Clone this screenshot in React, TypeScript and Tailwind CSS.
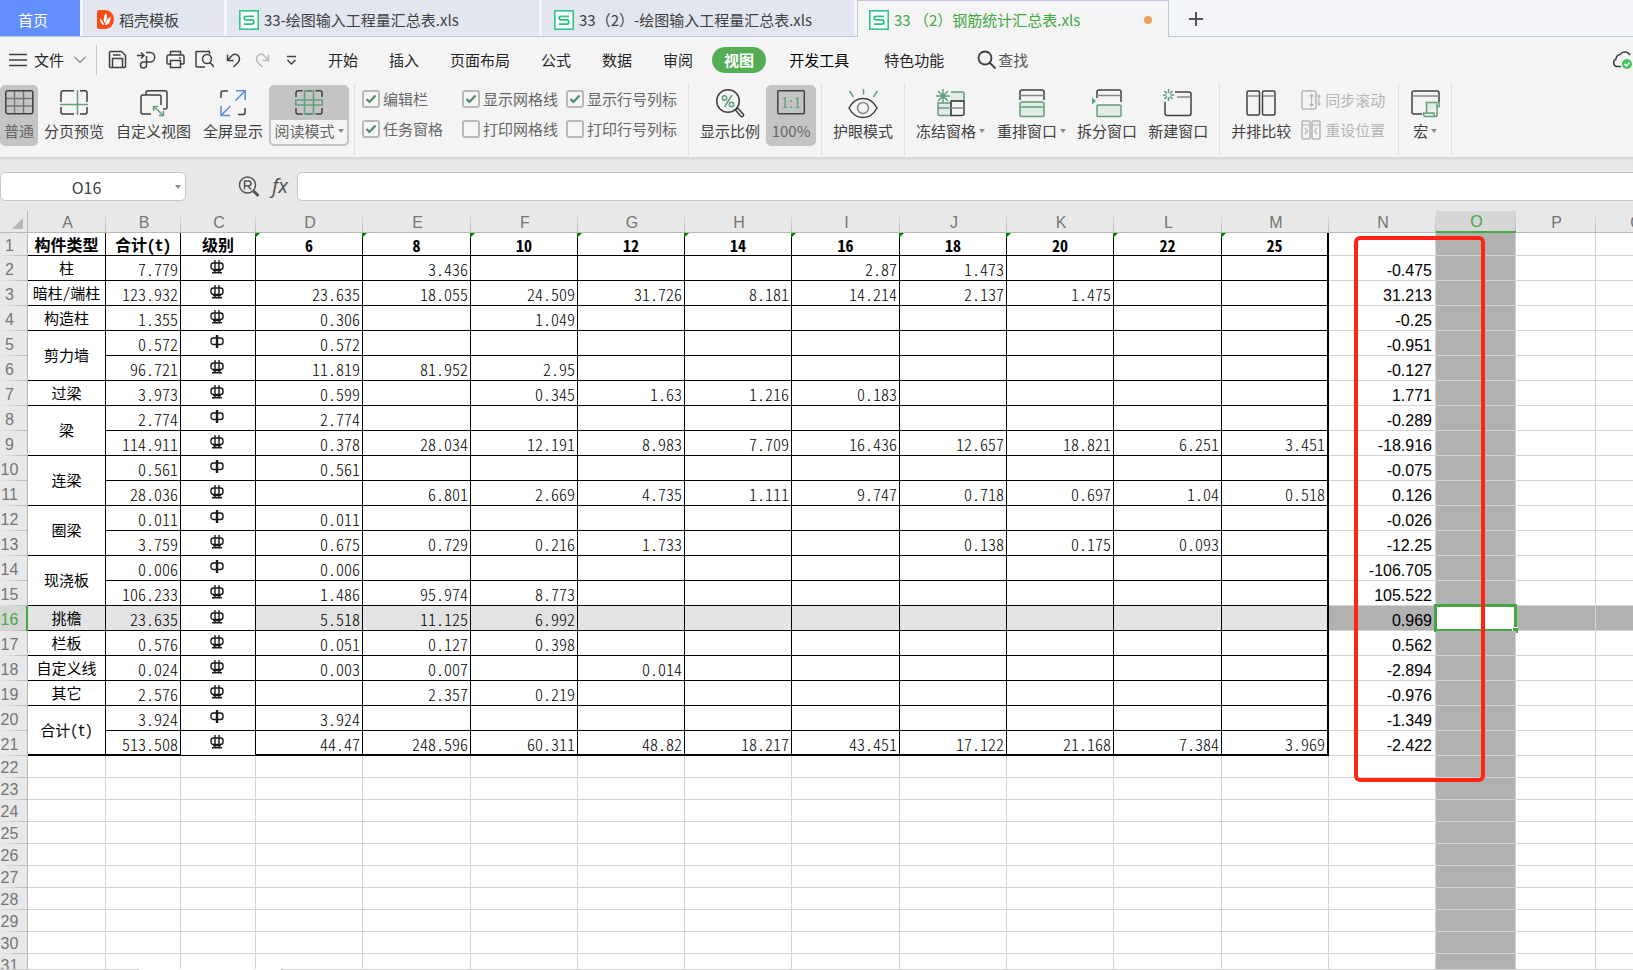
import { useState } from "react";
import type { ReactNode } from "react";
import clsx from "clsx";

type SheetRow = {
  name?: string;
  span?: number;
  total: string;
  grade: 1 | 3;
  values: string[];
  diff: string;
};

const COLUMNS = [
  { letter: "A", width: 78 },
  { letter: "B", width: 75 },
  { letter: "C", width: 75 },
  { letter: "D", width: 107 },
  { letter: "E", width: 108 },
  { letter: "F", width: 107 },
  { letter: "G", width: 107 },
  { letter: "H", width: 107 },
  { letter: "I", width: 108 },
  { letter: "J", width: 107 },
  { letter: "K", width: 107 },
  { letter: "L", width: 108 },
  { letter: "M", width: 107 },
  { letter: "N", width: 107 },
  { letter: "O", width: 80 },
  { letter: "P", width: 80 },
  { letter: "Q", width: 80 },
];

const DIAMETERS = ["6", "8", "10", "12", "14", "16", "18", "20", "22", "25"];

// values follow DIAMETERS, "" is an empty cell
const ROWS: SheetRow[] = [
  { name: "柱", total: "7.779", grade: 3, values: ["", "3.436", "", "", "", "2.87", "1.473", "", "", ""], diff: "-0.475" },
  { name: "暗柱/端柱", total: "123.932", grade: 3, values: ["23.635", "18.055", "24.509", "31.726", "8.181", "14.214", "2.137", "1.475", "", ""], diff: "31.213" },
  { name: "构造柱", total: "1.355", grade: 3, values: ["0.306", "", "1.049", "", "", "", "", "", "", ""], diff: "-0.25" },
  { name: "剪力墙", span: 2, total: "0.572", grade: 1, values: ["0.572", "", "", "", "", "", "", "", "", ""], diff: "-0.951" },
  { total: "96.721", grade: 3, values: ["11.819", "81.952", "2.95", "", "", "", "", "", "", ""], diff: "-0.127" },
  { name: "过梁", total: "3.973", grade: 3, values: ["0.599", "", "0.345", "1.63", "1.216", "0.183", "", "", "", ""], diff: "1.771" },
  { name: "梁", span: 2, total: "2.774", grade: 1, values: ["2.774", "", "", "", "", "", "", "", "", ""], diff: "-0.289" },
  { total: "114.911", grade: 3, values: ["0.378", "28.034", "12.191", "8.983", "7.709", "16.436", "12.657", "18.821", "6.251", "3.451"], diff: "-18.916" },
  { name: "连梁", span: 2, total: "0.561", grade: 1, values: ["0.561", "", "", "", "", "", "", "", "", ""], diff: "-0.075" },
  { total: "28.036", grade: 3, values: ["", "6.801", "2.669", "4.735", "1.111", "9.747", "0.718", "0.697", "1.04", "0.518"], diff: "0.126" },
  { name: "圈梁", span: 2, total: "0.011", grade: 1, values: ["0.011", "", "", "", "", "", "", "", "", ""], diff: "-0.026" },
  { total: "3.759", grade: 3, values: ["0.675", "0.729", "0.216", "1.733", "", "", "0.138", "0.175", "0.093", ""], diff: "-12.25" },
  { name: "现浇板", span: 2, total: "0.006", grade: 1, values: ["0.006", "", "", "", "", "", "", "", "", ""], diff: "-106.705" },
  { total: "106.233", grade: 3, values: ["1.486", "95.974", "8.773", "", "", "", "", "", "", ""], diff: "105.522" },
  { name: "挑檐", total: "23.635", grade: 3, values: ["5.518", "11.125", "6.992", "", "", "", "", "", "", ""], diff: "0.969" },
  { name: "栏板", total: "0.576", grade: 3, values: ["0.051", "0.127", "0.398", "", "", "", "", "", "", ""], diff: "0.562" },
  { name: "自定义线", total: "0.024", grade: 3, values: ["0.003", "0.007", "", "0.014", "", "", "", "", "", ""], diff: "-2.894" },
  { name: "其它", total: "2.576", grade: 3, values: ["", "2.357", "0.219", "", "", "", "", "", "", ""], diff: "-0.976" },
  { name: "合计(t)", span: 2, total: "3.924", grade: 1, values: ["3.924", "", "", "", "", "", "", "", "", ""], diff: "-1.349" },
  { total: "513.508", grade: 3, values: ["44.47", "248.596", "60.311", "48.82", "18.217", "43.451", "17.122", "21.168", "7.384", "3.969"], diff: "-2.422" },
];

const EMPTY_ROWS = [22, 23, 24, 25, 26, 27, 28, 29, 30, 31];
const ACTIVE_ROW = 16;
const ACTIVE_COL = "O";

const DARK = "#404040";
const GREEN = "#5f9f7b";
const PALE = "#e3ebe5";

function Svg({
  w = 30,
  h = 30,
  stroke = DARK,
  sw = 1.5,
  children,
}: {
  w?: number;
  h?: number;
  stroke?: string;
  sw?: number;
  children: ReactNode;
}) {
  return (
    <svg
      width={w}
      height={h}
      viewBox={`0 0 ${w} ${h}`}
      fill="none"
      stroke={stroke}
      strokeWidth={sw}
      aria-hidden="true"
      className="shrink-0"
    >
      {children}
    </svg>
  );
}

/* ---------- tab strip ---------- */

function SheetFileIcon() {
  return (
    <Svg w={20} h={20} stroke="#26c281" sw={1.5}>
      <rect x="0.8" y="0.8" width="18.4" height="18.4" fill="#fff" />
      <path d="M15 6.3H7.2Q5.2 6.3 5.2 8.1T7.2 9.9H12.8Q14.8 9.9 14.8 11.9T12.8 14.2H5" strokeWidth="1.8" />
    </Svg>
  );
}

function DocerIcon() {
  return (
    <Svg w={17} h={19} stroke="none">
      <path d="M2 0h6.5a8.5 9.5 0 0 1 0 19H2a2 2 0 0 1-2-2V2a2 2 0 0 1 2-2z" fill="#fb4a12" />
      <path d="M8.5 3q3 3 .5 7.500q-.5 1-.8 3q-1.600-2-1.500-4.500q.2-3 1.800-6zM13.500 6.500q.3 5-2 7.200-1.500 1.300-3.300 1.500 0-3 1.500-5 1.500-2.200 3.800-3.700zM2.800 8.500q3 1.500 4.500 6.500-4-.5-4.500-6.500z" fill="#fff" />
    </Svg>
  );
}

function TabBar() {
  const inactive =
    "flex h-full items-center gap-[5px] border-b border-[#bcc7dc] bg-[#e2e6ef] pl-3 pt-1 text-[#404040]";
  return (
    <nav className="flex h-[37px] gap-[3px] overflow-hidden bg-[#f2f4f9] shadow-[inset_0_-1px_0_#bcc7dc]">
      <button className="h-full w-20 shrink-0 border-b border-[#bcc7dc] bg-[#638ffe] pr-[14px] pt-1 text-white">
        首页
      </button>
      <button className={clsx(inactive, "w-[141px] shrink-0")}>
        <span className="flex w-[19px] justify-end">
          <DocerIcon />
        </span>
        稻壳模板
      </button>
      <button className={clsx(inactive, "w-[312px] shrink-0")}>
        <SheetFileIcon />
        33-绘图输入工程量汇总表.xls
      </button>
      <button className={clsx(inactive, "w-[312px] shrink-0")}>
        <SheetFileIcon />
        33（2）-绘图输入工程量汇总表.xls
      </button>
      <button className="flex h-full w-[312px] shrink-0 items-center gap-[5px] border-x border-t border-[#bcc7dc] bg-[#f4f4f4] pl-[11px] pr-4 pt-[2px] text-[#3fa83f]">
        <SheetFileIcon />
        <span className="grow text-left">33 （2）钢筋统计汇总表.xls</span>
        <span className="size-2 rounded-full bg-[#e6a15c]" />
      </button>
      <button aria-label="新建标签" className="flex h-full w-12 items-center justify-center pt-[2px]">
        <Svg w={16} h={16} stroke="#555" sw={2}>
          <path d="M8 1v14M1 8h14" />
        </Svg>
      </button>
    </nav>
  );
}

/* ---------- menu row ---------- */

function QuickAccess() {
  const btn = "flex size-[19px] items-center justify-center";
  return (
    <div className="flex items-center gap-[10px]">
      <button className={btn} aria-label="保存">
        <Svg w={19} h={19}>
          <path d="M2.500 1.500h11l4 4v11a1 1 0 0 1-1 1h-14a1 1 0 0 1-1-1v-14a1 1 0 0 1 1-1z" />
          <path d="M4.500 17V8.500h10V17M5 5h7.500" />
        </Svg>
      </button>
      <button className={btn} aria-label="输出为PDF">
        <Svg w={19} h={19}>
          <path d="M0 5.500h6.500M4 2.500l3 3-3 3M9 2.500h4a4.500 4.500 0 0 1 0 9.500H6.500a3 3 0 1 0 3 3V6" />
        </Svg>
      </button>
      <button className={btn} aria-label="打印">
        <Svg w={19} h={19}>
          <path d="M4.500 5V1.500h10V5M4 14H2a1 1 0 0 1-1-1V6.500a1.500 1.500 0 0 1 1.500-1.500h14A1.500 1.500 0 0 1 18 6.500V13a1 1 0 0 1-1 1h-2M4.500 10.500h10v7h-10zM13 8h2" />
        </Svg>
      </button>
      <button className={btn} aria-label="打印预览">
        <Svg w={19} h={19}>
          <path d="M14.500 4V1.500H1.500A1 1 0 0 0 1 2v14a1 1 0 0 0 1 1h8" />
          <circle cx="12" cy="9" r="4.500" />
          <path d="M15 12.500l4 4.500" />
        </Svg>
      </button>
      <button className={btn} aria-label="撤消">
        <Svg w={19} h={19}>
          <path d="M3.500 4.500v6h6M4 10l4-4.500q3-2.500 6 0 3 3.500 0 7l-4.500 4.500" />
        </Svg>
      </button>
      <button className={btn} aria-label="恢复">
        <Svg w={19} h={19} stroke="#b8b8b8">
          <path d="M15.500 4.500v6h-6M15 10l-4-4.500q-3-2.500-6 0-3 3.500 0 7l4.500 4.500" />
        </Svg>
      </button>
      <button className={btn} aria-label="自定义快速访问工具栏">
        <Svg w={19} h={19}>
          <path d="M5 6.500h9M5.500 10l4 4 4-4" />
        </Svg>
      </button>
    </div>
  );
}

function MenuBar() {
  const item = "px-[15px]";
  return (
    <div className="flex h-[46px] items-center text-[#262626]">
      <button className="flex items-center gap-[7px] pl-[9px]">
        <Svg w={18} h={14}>
          <path d="M0 1.500h18M0 7h18M0 12.500h18" />
        </Svg>
        文件
        <span className="ml-[3px]">
          <Svg w={12} h={8} stroke="#8a8a8a" sw={1.2}>
            <path d="M.5 1l5.500 5.500L11.500 1" />
          </Svg>
        </span>
      </button>
      <span className="ml-[10px] mr-[11px] h-[30px] w-px bg-[#c8c8c8]" />
      <QuickAccess />
      <nav className="ml-3 flex items-center gap-px whitespace-nowrap">
        <button className={item}>开始</button>
        <button className={item}>插入</button>
        <button className={item}>页面布局</button>
        <button className={item}>公式</button>
        <button className={item}>数据</button>
        <button className={item}>审阅</button>
        <button className="ml-[3px] h-[26px] rounded-full bg-[#54ad55] px-3 font-bold text-white">
          视图
        </button>
        <button className="ml-[7px] px-[15px] text-black">开发工具</button>
        <button className="ml-1 px-[15px]">特色功能</button>
      </nav>
      <button className="ml-[18px] flex items-center gap-px text-[#555]">
        <Svg w={20} h={20} sw={1.8}>
          <circle cx="8" cy="8" r="6.500" />
          <path d="M12.500 12.500l6 6" />
        </Svg>
        查找
      </button>
      <button aria-label="已同步" className="-mr-1 ml-auto">
        <Svg w={26} h={20}>
          <path d="M10 16.500H5.500a4 4 0 0 1-.5-7.500 5 5 0 0 1 4-4.500 6 6 0 0 1 10 .5" />
          <circle cx="16" cy="14" r="5" fill="#43c55c" stroke="none" />
          <path d="M13.500 14l2 2 3-3.500" stroke="#fff" />
        </Svg>
      </button>
    </div>
  );
}

/* ---------- ribbon ---------- */

function Caret() {
  return (
    <svg width="6" height="4" viewBox="0 0 6 4" aria-hidden="true" className="ml-[3px] shrink-0">
      <path d="M0 0h6L3 4z" fill="#8a8a8a" />
    </svg>
  );
}

function RibbonButton({
  icon,
  label,
  caret,
  active,
  className = "px-[6px]",
}: {
  icon: ReactNode;
  label: string;
  caret?: boolean;
  active?: boolean;
  className?: string;
}) {
  return (
    <button
      className={clsx(
        "flex h-[61px] shrink-0 flex-col items-center pt-1",
        active ? "rounded-[5px] bg-[#c4c4c4] text-[#666]" : "text-[#404040]",
        className
      )}
    >
      <span className="h-[30px]">{icon}</span>
      <span className="flex items-center whitespace-nowrap leading-6">
        {label}
        {caret && <Caret />}
      </span>
    </button>
  );
}

function CheckOption({ label, defaultChecked }: { label: string; defaultChecked?: boolean }) {
  return (
    <label className="flex h-[18px] items-center gap-[3px] whitespace-nowrap text-[#666]">
      <span className="relative size-[18px]">
        <input
          type="checkbox"
          defaultChecked={defaultChecked}
          className="peer block size-[18px] appearance-none rounded-[3px] border-2 border-[#b9b9b9] bg-[#f6f6f6]"
        />
        <svg
          width="18"
          height="18"
          viewBox="0 0 18 18"
          fill="none"
          stroke="#4f8a6a"
          strokeWidth="2.2"
          aria-hidden="true"
          className="pointer-events-none absolute inset-0 hidden peer-checked:block"
        >
          <path d="M4.500 9l3 3 6-6.500" />
        </svg>
      </span>
      {label}
    </label>
  );
}

function Divider() {
  return <span className="-mt-[2px] mx-[5px] h-[72px] w-px shrink-0 bg-[#dedede]" />;
}

const icons = {
  normal: (
    <Svg>
      <path d="M10.500 2v22M19.500 2v22M2 9.500h27M2 17h27" stroke="#777" />
      <rect x="1.800" y="1.800" width="27" height="23" rx="2" />
    </Svg>
  ),
  pageBreak: (
    <Svg>
      <path d="M15 1.800H4a2 2 0 0 0-2 2V13M21 1.800h5a2 2 0 0 1 2 2V13M2 18v5a2 2 0 0 0 2 2h11M28 18v5a2 2 0 0 1-2 2h-5" />
      <path d="M18.500 1v25M1 15.500h28" stroke={GREEN} />
    </Svg>
  ),
  customView: (
    <Svg>
      <path d="M7 6V3.800a2 2 0 0 1 2-2h17a2 2 0 0 1 2 2V18a2 2 0 0 1-2 2h-2" />
      <path d="M12 25H4a2 2 0 0 1-2-2V8a2 2 0 0 1 2-2h16a2 2 0 0 1 2 2v8" />
      <path d="M14.500 17.500l10 9M14.500 22v-4.500H19M24.500 22v4.500H20" stroke={GREEN} />
    </Svg>
  ),
  fullScreen: (
    <Svg>
      <path d="M3 9V3.500a1.500 1.500 0 0 1 1.500-1.500H10M27 19v5a1.500 1.500 0 0 1-1.500 1.500H20" />
      <path d="M17.500 11.500L27 2M18 1.800h9.200V11M12.500 17L3 26.500M3 17v9.500h9" stroke="#5b8bd9" />
    </Svg>
  ),
  reading: (
    <Svg>
      <path d="M8.500 1.800H4a2 2 0 0 0-2 2V8M12 1.800h6M21.500 1.800H26a2 2 0 0 1 2 2V8M2 19v4a2 2 0 0 0 2 2h4.500M12 25h6M28 19v4a2 2 0 0 1-2 2h-4.500" />
      <path d="M10.500 2h9v23h-9zM1.800 11h26.500v5H1.800z" stroke={GREEN} />
    </Svg>
  ),
  zoom: (
    <Svg>
      <circle cx="13" cy="12" r="11.300" />
      <path d="M20.500 21l2-2 6 6.500q.5 1.500-1 2-1 .5-2-.5z" />
      <g stroke={GREEN}>
        <circle cx="9.500" cy="9" r="2.200" />
        <circle cx="16.500" cy="15.500" r="2.200" />
        <path d="M17 6L9.500 18" />
      </g>
    </Svg>
  ),
  oneToOne: (
    <Svg>
      <rect x="1.800" y="1.800" width="26.500" height="23" rx="1" />
      <text
        x="15"
        y="19"
        textAnchor="middle"
        fontSize="16"
        stroke="none"
        fill={GREEN}
        fontFamily="Liberation Serif, serif"
      >
        1:1
      </text>
    </Svg>
  ),
  eye: (
    <Svg>
      <path d="M1 19q5-9.500 14-9.500T29 19q-5 9.500-14 9.500T1 19z" />
      <circle cx="15" cy="19" r="5.500" stroke="#888" />
      <path d="M1.500 2l4 6M15.500 0v5.500M29.500 2l-4 6" stroke={GREEN} />
    </Svg>
  ),
  freeze: (
    <Svg>
      <path d="M2 14h13v12.500H4a2 2 0 0 1-2-2z" fill={PALE} stroke={GREEN} />
      <path d="M15 3h11a2 2 0 0 1 2 2v7H15" fill={PALE} stroke={GREEN} />
      <path d="M15 12h13v12.500a2 2 0 0 1-2 2H15z" />
      <path d="M2 19h26" stroke="#888" />
      <path d="M7 0v14M0 7h14M2 2l10 10M12 2L2 12" stroke={GREEN} />
    </Svg>
  ),
  arrange: (
    <Svg>
      <path d="M3 11V3a2 2 0 0 1 2-2h20a2 2 0 0 1 2 2v8" />
      <path d="M3 6.500h24" stroke="#888" />
      <rect x="3" y="13" width="24" height="14.500" rx="2" fill={PALE} stroke={GREEN} />
      <path d="M3 18h24" stroke={GREEN} />
    </Svg>
  ),
  split: (
    <Svg>
      <path d="M5 9V3a2 2 0 0 1 2-2h20a2 2 0 0 1 2 2v10" />
      <path d="M5 6.500h24" stroke="#888" />
      <path d="M0 8.500l4 3.500-4 3.500z" fill={GREEN} stroke="none" />
      <rect x="5" y="16" width="24" height="11.500" rx="1" fill={PALE} stroke={GREEN} />
    </Svg>
  ),
  newWindow: (
    <Svg>
      <path d="M12 3h14a2 2 0 0 1 2 2v19.500a2 2 0 0 1-2 2H4a2 2 0 0 1-2-2V13" />
      <path d="M14 8h14" stroke="#888" />
      <path
        d="M5.500 0v4M5.500 8v4M0 6h3.500M7.500 6H11M1.500 2l2.500 2.500M9.500 2L7 4.500M1.500 10L4 7.500M9.500 10L7 7.500"
        stroke={GREEN}
      />
    </Svg>
  ),
  sideBySide: (
    <Svg>
      <rect x="1" y="2" width="12.500" height="24" rx="1.500" />
      <rect x="16.500" y="2" width="12.500" height="24" rx="1.500" />
      <path d="M1 7h12M17 7h12" stroke="#888" />
    </Svg>
  ),
  macro: (
    <Svg>
      <path d="M12 25H4a2 2 0 0 1-2-2V4a2 2 0 0 1 2-2h23a2 2 0 0 1 2 2v9" />
      <path d="M2 7h27" stroke="#888" />
      <path d="M16.500 24V13.500H28q1.500 0 1.500 1.500v2.500H27" fill={PALE} stroke={GREEN} />
      <path d="M27 14.500V26q0 1.500-1.500 1.500H15q-1.500 0-1.500-3.500h10.500q0 3.500 1.500 3.500" fill={PALE} stroke={GREEN} />
    </Svg>
  ),
};

function Ribbon() {
  return (
    <div className="flex h-[74px] items-start overflow-hidden pt-[2px]">
      <RibbonButton icon={icons.normal} label="普通" active className="w-[38px]" />
      <RibbonButton icon={icons.pageBreak} label="分页预览" />
      <RibbonButton icon={icons.customView} label="自定义视图" />
      <RibbonButton icon={icons.fullScreen} label="全屏显示" />
      <button className="flex h-[61px] w-20 shrink-0 flex-col items-center overflow-hidden rounded-[5px] border-2 border-[#c4c4c4] bg-[#c4c4c4] pt-[2px] text-[#666]">
        <span className="h-[31px]">{icons.reading}</span>
        <span className="flex h-6 w-full items-center justify-center whitespace-nowrap rounded-b-[3px] bg-[#f4f4f4] pb-[2px]">
          阅读模式
          <Caret />
        </span>
      </button>
      <Divider />
      <div className="ml-[2px] grid h-[53px] grid-cols-[100px_104px_117px] content-between pt-[5px]">
        <CheckOption label="编辑栏" defaultChecked />
        <CheckOption label="显示网格线" defaultChecked />
        <CheckOption label="显示行号列标" defaultChecked />
        <CheckOption label="任务窗格" defaultChecked />
        <CheckOption label="打印网格线" />
        <CheckOption label="打印行号列标" />
      </div>
      <Divider />
      <RibbonButton icon={icons.zoom} label="显示比例" />
      <RibbonButton icon={icons.oneToOne} label="100%" active className="w-[50px]" />
      <Divider />
      <RibbonButton icon={icons.eye} label="护眼模式" />
      <Divider />
      <RibbonButton icon={icons.freeze} label="冻结窗格" caret />
      <RibbonButton icon={icons.arrange} label="重排窗口" caret />
      <RibbonButton icon={icons.split} label="拆分窗口" className="px-[5px]" />
      <RibbonButton icon={icons.newWindow} label="新建窗口" />
      <Divider />
      <RibbonButton icon={icons.sideBySide} label="并排比较" />
      <div className="ml-1 mr-2 flex flex-col gap-[6px] whitespace-nowrap pt-[3px] text-[#b5b5b5]">
        <button className="flex h-6 items-center gap-[4px]" disabled>
          <Svg w={20} h={20} stroke="#b5b5b5">
            <rect x="1" y="1" width="14" height="18" rx="1.500" />
            <path d="M10.500 5v10M8.500 6.500l2-2 2 2M8.500 14l2 2 2-2M18 5v10M16.500 6.500L18 5l1.500 1.500M16.500 13.500L18 15l1.500-1.500" strokeWidth="1.200" />
          </Svg>
          同步滚动
        </button>
        <button className="flex h-6 items-center gap-[4px]" disabled>
          <Svg w={20} h={20} stroke="#b5b5b5">
            <rect x="1" y="1" width="8" height="18" rx="1" />
            <rect x="11" y="1" width="8" height="18" rx="1" />
            <path d="M1 5h8M11 5h8M4 8l2.500 3L4 14M16 8l-2.500 3 2.500 3" strokeWidth="1.200" />
          </Svg>
          重设位置
        </button>
      </div>
      <Divider />
      <RibbonButton icon={icons.macro} label="宏" caret />
      <Divider />
    </div>
  );
}

/* ---------- formula bar ---------- */

function FormulaBar() {
  const [cellRef, setCellRef] = useState("O16");
  const [formula, setFormula] = useState("");

  return (
    <div className="flex h-[54px] items-center pt-[6px]">
      <div className="flex h-[29px] w-[186px] shrink-0 items-center rounded-[5px] border border-[#c6c6c6] bg-white pr-1">
        <input
          aria-label="名称框"
          value={cellRef}
          onChange={(e) => setCellRef(e.target.value)}
          className="w-full min-w-0 bg-transparent text-center text-base text-[#404040] outline-none"
        />
        <Caret />
      </div>
      <button aria-label="浏览公式结果" className="ml-[52px]">
        <Svg w={22} h={22} stroke="#555">
          <circle cx="9.500" cy="9" r="8" />
          <path d="M15.500 15l5 5" strokeWidth="3" />
          <path d="M6.500 13.500V5h4q2.500.3 2.500 2.400T10.500 9.800h-4M10 10l3 3.500" />
        </Svg>
      </button>
      <button
        aria-label="插入函数"
        className="ml-2 w-6 pb-[2px] font-['Noto_Sans',sans-serif] text-xl italic leading-6 text-[#555]"
      >
        fx
      </button>
      <input
        aria-label="编辑栏"
        value={formula}
        onChange={(e) => setFormula(e.target.value)}
        className="-mr-2 ml-[5px] h-[29px] min-w-0 grow rounded-[5px] border border-[#c6c6c6] bg-white px-2 outline-none"
      />
    </div>
  );
}

/* ---------- sheet ---------- */

// rebar grade marks: one bar for HPB300, three-stroke mark for HRB400
function GradeMark({ grade }: { grade: 1 | 3 }) {
  return (
    <svg
      width="14"
      height="14"
      viewBox="0 0 14 14"
      fill="none"
      stroke="#1a1a1a"
      strokeWidth="1.400"
      role="img"
      aria-label={grade === 1 ? "一级钢" : "三级钢"}
      className="mx-auto -translate-x-px"
    >
      <rect x="1" y="3" width="12" height="6.500" rx="2.500" />
      {grade === 1 ? (
        <path d="M7 0v13" strokeWidth="2.400" />
      ) : (
        <path d="M5 0v12M9 0v12M3 10.500h8M2 12.800h10" />
      )}
    </svg>
  );
}

function RowHead({ n }: { n: number }) {
  const active = n === ACTIVE_ROW;
  return (
    <th
      scope="row"
      className={clsx(
        "bg-[linear-gradient(to_right,transparent,#b8b8b8)] bg-[length:100%_1px] bg-bottom bg-no-repeat p-0 pt-[3px] font-['Liberation_Sans',Arial,sans-serif] text-base font-normal leading-[18px]",
        active
          ? "border-r-2 border-[#43a843] bg-[#d6d6d6] text-[#43a843]"
          : "border-r border-[#b8b8b8] bg-[#e8e8e8] text-[#757575]"
      )}
    >
      <span className="flex w-[19px] justify-center">{n}</span>
    </th>
  );
}

// plain cells to the right of the bordered table
function SideCells({ n, diff }: { n: number; diff?: string }) {
  const fill = n === ACTIVE_ROW ? "bg-[#b1b1b1]" : "bg-white";
  const line = "border-b border-r border-[#d3d3d3] p-0";
  return (
    <>
      <td
        className={clsx(
          line,
          fill,
          "pr-[3px] pt-[6px] text-right font-['Liberation_Sans',Arial,sans-serif] text-base leading-[18px]"
        )}
      >
        {diff}
      </td>
      <td className={clsx(line, "relative bg-[#b1b1b1]")}>
        {n === ACTIVE_ROW && (
          <div className="absolute -inset-[2px] border-[3px] border-[#43a843] bg-white">
            <span className="absolute -bottom-1 -right-1 size-[6px] border-l border-t border-white bg-[#43a843]" />
          </div>
        )}
      </td>
      <td className={clsx(line, fill)} />
      <td className={clsx(line, fill)} />
    </>
  );
}

function Sheet() {
  const num =
    "border-b border-r border-black pr-[2px] pt-[3px] text-right text-base font-light leading-5";

  return (
    <main className="relative min-h-0 grow overflow-hidden bg-[#e8e8e8]">
      <table className="w-[1676px] table-fixed border-separate border-spacing-0 text-black [font-feature-settings:'hwid']">
        <colgroup>
          <col style={{ width: 28 }} />
          {COLUMNS.map((c) => (
            <col key={c.letter} style={{ width: c.width }} />
          ))}
        </colgroup>
        <thead>
          <tr className="h-[22px]">
            <th className="border-b border-r border-[#b8b8b8] p-0">
              <svg width="11" height="11" viewBox="0 0 11 11" aria-hidden="true" className="ml-3 mt-1">
                <path d="M11 0v11H0z" fill="#b8b8b8" />
              </svg>
            </th>
            {COLUMNS.map((c) => (
              <th
                key={c.letter}
                scope="col"
                className={clsx(
                  "bg-[linear-gradient(to_bottom,transparent,#b8b8b8)] bg-[length:1px_100%] bg-right bg-no-repeat p-0 pl-px pt-[3px] font-['Liberation_Sans',Arial,sans-serif] text-base font-normal leading-4",
                  c.letter === ACTIVE_COL
                    ? "border-b-2 border-[#43a843] bg-[#d6d6d6] text-[#43a843]"
                    : "border-b border-[#b8b8b8] text-[#757575]"
                )}
              >
                {c.letter}
              </th>
            ))}
          </tr>
        </thead>
        <tbody className="bg-white">
          <tr className="h-[23px]">
            <RowHead n={1} />
            {["构件类型", "合计(t)", "级别"].map((t) => (
              <td key={t} className="whitespace-nowrap border-b border-r border-black p-0 text-center text-base font-bold leading-5">
                {t}
              </td>
            ))}
            {DIAMETERS.map((d, i) => (
              <td
                key={d}
                className={clsx(
                  "relative border-b border-black p-0 pt-[2px] text-center text-base font-bold leading-5",
                  i === DIAMETERS.length - 1 ? "border-r-2" : "border-r"
                )}
              >
                <svg width="5" height="5" viewBox="0 0 5 5" aria-hidden="true" className="absolute -left-px top-0">
                  <path d="M0 0h5L0 5z" fill="#007f00" />
                </svg>
                {d}
              </td>
            ))}
            <SideCells n={1} />
          </tr>
          {ROWS.map((row, r) => {
            const n = r + 2;
            const fill = n === ACTIVE_ROW && "bg-[#e3e3e3]";
            const last = r === ROWS.length - 1;
            return (
              <tr key={n} className="h-[25px]">
                <RowHead n={n} />
                {row.name && (
                  <td
                    rowSpan={row.span}
                    className={clsx(
                      "whitespace-nowrap border-r border-black p-0 text-center text-[15px] leading-5",
                      row.name === "合计(t)" ? "border-b-2" : "border-b",
                      fill
                    )}
                  >
                    {row.name}
                  </td>
                )}
                <td className={clsx(num, fill, last && "border-b-2")}>{row.total}</td>
                <td className="border-b border-r border-black p-0 pb-[2px]">
                  <GradeMark grade={row.grade} />
                </td>
                {row.values.map((v, i) => (
                  <td
                    key={i}
                    className={clsx(
                      num,
                      fill,
                      last && "border-b-2",
                      i === row.values.length - 1 && "border-r-2"
                    )}
                  >
                    {v}
                  </td>
                ))}
                <SideCells n={n} diff={row.diff} />
              </tr>
            );
          })}
          {EMPTY_ROWS.map((n) => (
            <tr key={n} className="h-[22px]">
              <RowHead n={n} />
              {COLUMNS.slice(0, 13).map((c) => (
                <td key={c.letter} className="border-b border-r border-[#d3d3d3]" />
              ))}
              <SideCells n={n} />
            </tr>
          ))}
        </tbody>
      </table>
      {/* red marker drawn over N1:O23 */}
      <div className="pointer-events-none absolute left-[1354px] top-[25px] h-[546px] w-[131px] rounded-md border-4 border-[#ff2414]" />
    </main>
  );
}

export default function App() {
  return (
    <div className="flex h-screen flex-col overflow-hidden bg-[#f4f4f4] font-['Noto_Sans_CJK_SC',sans-serif] text-[15px] leading-5">
      <TabBar />
      <header>
        <MenuBar />
        <Ribbon />
      </header>
      <div className="bg-[#e8e8e8] shadow-[inset_0_4px_3px_-2px_#d4d4d4]">
        <FormulaBar />
      </div>
      <Sheet />
      <footer className="flex h-px shrink-0 bg-[#cfcfcf]">
        <span className="ml-[139px] w-[142px] bg-white" />
      </footer>
    </div>
  );
}
